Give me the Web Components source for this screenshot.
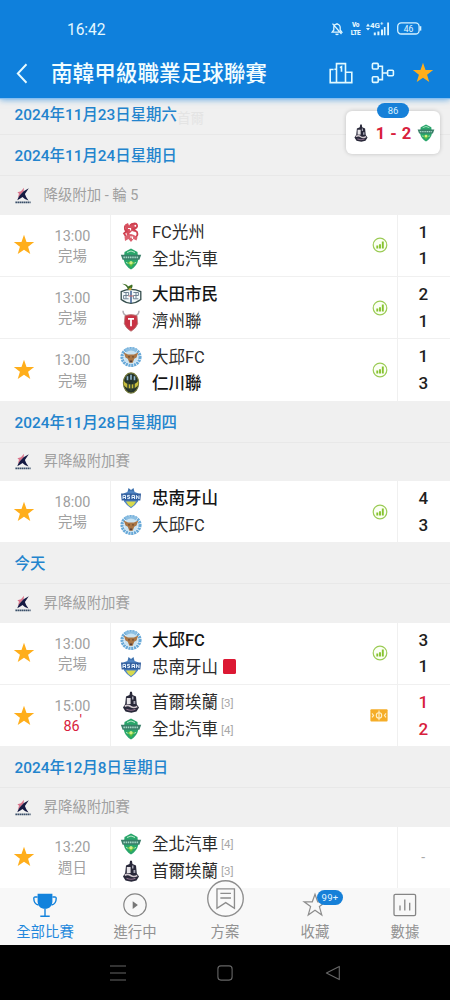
<!DOCTYPE html>
<html lang="zh-Hant">
<head>
<meta charset="utf-8">
<meta name="viewport" content="width=device-width, initial-scale=1">
<title>南韓甲級職業足球聯賽</title>
<style>
  html, body {
    margin: 0;
    height: 100%;
    background: #fff;
  }
  body {
    font-family: Roboto, "Noto Sans CJK TC", sans-serif;
    --blue: #0f80dc;
    --grey: #a0a0a0;
    --line: #f0f0f0;
    --red: #d8203c;
  }
</style>
</head>
<body>
<score-app></score-app>

<script>
const STAR = 'M12 .9l2.75 7.75 8.35.2-6.65 5 2.4 8.05L12 17.1l-6.85 4.8 2.4-8.05-6.65-5 8.35-.2z';

const ICONS = {
  back: '<svg viewBox="0 0 12 22"><path d="M10.7 1.3 1.6 11l9.1 9.7" fill="none" stroke="#e8fbff" stroke-width="2"/></svg>',
  podium: '<svg viewBox="0 0 24 22"><g fill="none" stroke="#e2faff" stroke-width="1.6"><path d="M7.5 20.6V1.6h9v19M7.5 7.3H5.4M4.6 7.5H1.2v13.1h21.6V10.3h-6"/><path d="M10.9 5.6 12.5 4.7v5"/></g></svg>',
  bracket: '<svg viewBox="0 0 24 22"><g fill="none" stroke="#e2faff" stroke-width="1.6"><rect x="1.4" y="1.4" width="5.8" height="5.6" rx="1"/><rect x="1.4" y="14.8" width="5.8" height="5.6" rx="1"/><rect x="16.6" y="8.2" width="5.8" height="5.6" rx="1"/><path d="M7.2 4.2h4.2v13.4H7.2M11.4 11h5.2"/></g></svg>',
  star: `<svg viewBox="0 0 24 24"><path d="${STAR}" fill="#ffae1b"/></svg>`,
  starLine: '<svg viewBox="0 0 24 24"><path d="M12 1.3l2.700 7.500h8.200l-6.500 4.800 2.400 8.500L12 17.300l-6.800 4.800 2.400-8.500L1.100 8.800h8.200z" fill="none" stroke="#8d8d8d" stroke-width="1.2"/></svg>',
  mute: '<svg viewBox="0 0 12 14"><g fill="none" stroke="#dff6ff" stroke-width="1.3"><path d="M1.2 10.2h9.6L9.2 8V5.4a3.2 3.2 0 0 0-6.4 0V8zM4.6 11.8q1.4 1.5 2.8 0M6 1v1.2M1.5 1.6l9 10.4"/></g></svg>',
  battery: '<svg viewBox="0 0 25 13"><rect x=".7" y=".8" width="21.4" height="11.2" rx="3.6" fill="none" stroke="#d5f1ff" stroke-width="1.3"/><path d="M23.5 4.2v4.4" stroke="#d5f1ff" stroke-width="1.6"/></svg>',
  signal: '<svg viewBox="0 0 24 14"><g fill="#dff6ff"><path d="M0 4.4 2 1.6l2 2.8zM0 6l2 2.6L4 6zM7.8 10.6h2v2.6h-2zM11.4 9.4h2v3.8h-2zM15 7.6h2v5.6h-2zM17.9 5h1.6v8.2h-1.6zM21.2.4h1.8v12.8h-1.8z"/></g></svg>',
  chart: '<svg viewBox="0 0 16 16"><circle cx="8" cy="8" r="6.8" fill="#fbfff4" stroke="#9bcb55" stroke-width="1.2"/><path d="M5.3 8.6v3M8 7.2v4.4M10.8 4.5v7.1" stroke="#86c32f" stroke-width="1.9"/></svg>',
  pitch: '<svg viewBox="0 0 18 13"><rect x=".4" y=".2" width="17.2" height="12.4" rx="1" fill="#f5ad28"/><g fill="none" stroke="#fff0c8" stroke-width="1.1"><circle cx="9" cy="6.4" r="2.7"/><path d="M9 1.6v9.6M2 4.4l1.6 2L2 8.4M16 4.4l-1.6 2 1.6 2"/></g></svg>',
  league: '<svg viewBox="0 0 16 17"><path d="M2.400 5.200 6 4.200 9 .8l-.4 3.600-3 3.200-2.800 3.400 1.200-4.200z" fill="#d9748b"/><path d="M4.800 8.200 8.600 4.200l5.200-2.900-3.900 5.700q1 3.400 3.600 6.500-4-.9-6-3.400-1.800 1.300-5.200 3.100.8-2.600 2.500-5z" fill="#151a42"/><path d="M.4 15.300h15.200" stroke="#3b506a" stroke-width="1.8" stroke-dasharray="1.600 .4"/></svg>',
  cup: '<svg viewBox="0 0 24 24"><path d="M4.6.8h14.8v7.4c0 4.5-3 7.6-7.4 7.6s-7.4-3.1-7.4-7.6z" fill="#1282dc"/><path d="M4.6 4H2.2Q.7 4 .8 5.6C.9 9.8 2.4 11.5 5.4 12M19.4 4h2.4q1.5 0 1.4 1.600c-.1 4.200-1.600 5.900-4.600 6.400M12 15.500v7.400M7.300 23.200h9.400" fill="none" stroke="#1282dc" stroke-width="1.4"/></svg>',
  play: '<svg viewBox="0 0 24 24"><circle cx="12" cy="12" r="11.2" fill="none" stroke="#858585" stroke-width="1.2"/><path d="M9.7 8.2v7.800l5.200-3.900z" fill="#777"/></svg>',
  note: '<svg viewBox="0 0 36 36"><circle cx="18" cy="18" r="17.3" fill="#fafafa" stroke="#8d8d8d" stroke-width="1.3"/><path d="M9.700 8.700h17v18.800L18.200 22l-8.500 5.500zM13 13h10.300M13 17.500h10.300" fill="none" stroke="#8d8d8d" stroke-width="1.3"/></svg>',
  stats: '<svg viewBox="0 0 24 24"><g fill="none" stroke="#858585" stroke-width="1.3"><rect x="1" y="1.3" width="21.6" height="21.4" rx="1.4"/><path d="M7 12.500v5M11.800 6.400v11.100M16.700 9.800v7.700"/></g></svg>',
  menu: '<svg viewBox="0 0 16 16"><path d="M0 1h16M0 8h16M0 15h16" stroke="#666" stroke-width="1.1"/></svg>',
  home: '<svg viewBox="0 0 16 16"><rect x=".9" y=".9" width="14.2" height="14.2" rx="3" fill="none" stroke="#666" stroke-width="1.1"/></svg>',
  prev: '<svg viewBox="0 0 16 16"><path d="M1.400 8 14.300 1.400v13.200z" fill="none" stroke="#666" stroke-width="1.1" stroke-linejoin="round"/></svg>',

  // club crests
  gwangju: '<svg viewBox="0 0 22 22"><path d="M5 3.500 8 2l1 2.500L12 2l4 1-2 2 3 1.500-3 1.500 1 3-3-1-3 3 2.500 1-4.500 1z" fill="#d8505f"/><path d="M5.200 4.500q-1.500 4 2 6.500M10 4q6-3 7 0t-4 4l4 3q1.500 4-2 5M7 10l-3 2.500 2 3" fill="none" stroke="#cf4050" stroke-width="1.8"/><path d="M4.500 15.500 8 14l3-1 3 1 3.500 2.500-1 3-3-1.500-2.500 3-2.500-3-3.500 2z" fill="#dc6270"/><path d="M8 7.500h2.500v2M10 16h2.500v2" fill="none" stroke="#fff" stroke-width="1.2"/></svg>',
  jeonbuk: '<svg viewBox="0 0 22 22"><path d="M4.500 4 11 .5l6.500 3.500.7 8Q17 18 11 21.500 5 18 3.800 12z" fill="#29a66b"/><path d="M7 4.500q4-3 8 0M6 14.500q5 3 10 0" fill="none" stroke="#b7e8c8" stroke-width="1"/><path d="M.8 6.700h20.400l-1.800 5H2.600z" fill="#397e68"/><path d="M3.400 9.300h15.200" stroke="#a5d8c6" stroke-width="1.7" stroke-dasharray="1.500 .7"/><path d="M7 14h8l-4 5z" fill="#5abf3c"/><circle cx="11" cy="14.700" r="1.7" fill="#d4ec86"/></svg>',
  daejeon: '<svg viewBox="0 0 22 22"><path d="M1.200 8.600Q11 4.300 20.800 8.600v8Q11 24 1.200 16.600z" fill="#f3f9fa" stroke="#344d4c" stroke-width="1.3"/><path d="M2 .8q5 0 6 2.600l4-1.800q1.300 1.200-.4 4l-3.900.7Q7 2.600 2 .8z" fill="#3d6e24"/><path d="M10.500 4.500q2 1.500.5 3l-3-1z" fill="#d0ac3c"/><path d="M3.600 9.500h5v3h-5v3.300h5M13.400 9.500h5v3h-5v3.300h5M6 9.500v6M16 9.500v6" stroke="#65798b" stroke-width=".9" fill="none"/><path d="M11 7.800V20" stroke="#3c5c92" stroke-width="1.5"/><path d="M8.500 13h5" stroke="#c86a6a" stroke-width="1"/></svg>',
  jeju: '<svg viewBox="0 0 22 22"><path d="M3 .7q0 5 5.500 5M19 .7q0 5-5.500 5" fill="none" stroke="#b1aeb4" stroke-width="1.5"/><path d="M5 5.700Q11 3.500 17 5.700l.7 8Q16 18.500 11 21.300 6 18.500 4.300 13.700z" fill="#c83344" stroke="#b47b78" stroke-width=".8"/><path d="M8 8h6v1.700h-2.100v6.500h-1.800V9.700H8z" fill="#fff"/></svg>',
  daegu: '<svg viewBox="0 0 22 22"><ellipse cx="11" cy="11" rx="9" ry="8.400" fill="none" stroke="#68a9d8" stroke-width="3.2" stroke-dasharray="2.200 .6"/><path d="M5 2.500h12l-1 4H6z" fill="#8dbfe2"/><ellipse cx="11" cy="11.300" rx="6.900" ry="6.700" fill="#c9e3f2"/><path d="M3.800 6.500 8 8.600h6l4.200-2.100-1.700 5-2.300 1.200-1.500 4H9.300l-1.500-4-2.300-1.200z" fill="#aa7544"/><path d="M8.400 10.800h1.200M12.400 10.800h1.200" stroke="#4d3626" stroke-width="1.2"/><path d="M9.600 14.500h2.800l-.6 1.700h-1.600z" fill="#533e36"/></svg>',
  incheon: '<svg viewBox="0 0 22 22"><ellipse cx="11" cy="11" rx="7.600" ry="10.100" fill="#25342c" stroke="#6d7232" stroke-width="1.1"/><path d="M7.500 4.300v4M11 2.700v5M14.500 4.300v4" stroke="#91b9cf" stroke-width="1.6"/><path d="M3.600 8.500Q6 12.500 11 12.500t7.400-4l-.3 4.500q-2 3.500-7.100 3.500T3.900 13z" fill="#c8bd3c"/><path d="M8 10v7M11 12v7M14 10v7" stroke="#354430" stroke-width="1.5"/></svg>',
  asan: '<svg viewBox="0 0 22 22"><path d="M7.500 5 8.500.9 11 3l2.500-2.100 1 4.100z" fill="#3e72af"/><path d="M3.500 6.500 11 3.500l7.500 3-.6 8Q15 19 11 21.200 7 19 4.100 14.500z" fill="#5085c3"/><path d="M1 6.500h20l-.7 7H1.700z" fill="#315e9e"/><path d="M3 12V8.400h2.500V12M3 10.500h2.500M9.800 8.400H7.500v1.500h2v1.700H7.300M12 12V8.400h2.500V12M12 10.500h2.500M16.400 12V8.400l2.600 3.400V8.400" fill="none" stroke="#e5f1fc" stroke-width="1"/><path d="M6 14.500h10Q14.500 18 11 20 7.500 18 6 14.500z" fill="#d8da4c"/></svg>',
  seoul: '<svg viewBox="0 0 22 22"><path d="M6 5.500 9.500 4l.6-3.300h1.800l.6 3.300 3.500 1.500.8 8 2.200 3-2.500 4-5.200 1.300L5.500 20.500 3 16.500 5.200 13z" fill="#282839"/><path d="M6.800 7h3.800v6H6.800z" fill="#e7e4e8"/><path d="M12 5.500h1.500v3H12zM13.500 10h1.800v3h-1.800z" fill="#a8a7b5"/><path d="M4.700 15.300q3.200-2 6 .2 3 2 6.600 0" fill="none" stroke="#d1c8ce" stroke-width="1.6"/><path d="M6.500 18.300q4.500 1.900 9 0" fill="none" stroke="#8f718c" stroke-width="1.1"/></svg>'
};

class UiIcon extends HTMLElement {
  constructor() {
    super();
    this.attachShadow({mode: 'open'});
  }
  connectedCallback() {
    this.shadowRoot.innerHTML = `
      <style>
        :host { display: block; flex: none; width: 22px; height: 22px; }
        svg { display: block; width: 100%; height: 100%; overflow: visible; }
      </style>${ICONS[this.getAttribute('name')] || ''}`;
  }
}

class StatusBar extends HTMLElement {
  constructor() {
    super();
    this.attachShadow({mode: 'open'}).innerHTML = `
      <style>
        :host {
          display: flex;
          align-items: center;
          box-sizing: border-box;
          height: 48px;
          padding: 10px 28px 0 67px;
          color: #e4f8ff;
        }
        .clock { font: 400 15.6px Roboto, sans-serif; letter-spacing: -.1px; margin: 2px auto 0 0; }
        .volte {
          display: flex;
          flex-direction: column;
          align-items: center;
          width: 11px;
          margin: 0 5px 0 7px;
          font: 900 6.5px/8px Roboto, sans-serif;
          letter-spacing: -.3px;
        }
        .net { position: relative; }
        .net span { position: absolute; left: 4px; top: 0; font: 700 8px/8px Roboto, sans-serif; }
        .battery { display: grid; margin-left: 7px; }
        .battery > * { grid-area: 1 / 1; }
        .battery span { font: 8.5px/14px Roboto, sans-serif; width: 23px; text-align: center; }
        .s1 { width: 12px; height: 14px; }
        .s2 { width: 24px; height: 14px; }
        .s3 { width: 25px; height: 13px; }
      </style>
      <span class="clock">16:42</span>
      <ui-icon class="s1" name="mute"></ui-icon>
      <div class="volte"><span>Vo</span><span>LTE</span></div>
      <div class="net"><ui-icon class="s2" name="signal"></ui-icon><span>4G⁺</span></div>
      <div class="battery"><ui-icon class="s3" name="battery"></ui-icon><span>46</span></div>`;
  }
}

class AppHeader extends HTMLElement {
  constructor() {
    super();
    this.attachShadow({mode: 'open'}).innerHTML = `
      <style>
        :host {
          display: block;
          flex: none;
          height: 98px;
          position: relative;
          z-index: 2;
          background: var(--blue);
          box-shadow: 0 1px 1px #87bff0, 0 2px 6px rgba(15, 128, 220, .55);
        }
        .bar {
          display: flex;
          align-items: center;
          height: 50px;
          padding: 0 16px;
        }
        h1 {
          margin: 0 auto 0 23px;
          padding-top: 2px;
          font-size: 21.6px;
          font-weight: 500;
          line-height: 30px;
          color: #f2fdff;
        }
        .back { width: 12px; height: 21px; }
        .tools { display: flex; align-items: center; gap: 18px; }
        .tools ui-icon { width: 24px; height: 22px; }
        .tools .fav { width: 22px; margin-left: -1px; }
      </style>
      <status-bar></status-bar>
      <div class="bar">
        <ui-icon class="back" name="back"></ui-icon>
        <h1><slot></slot></h1>
        <div class="tools">
          <ui-icon name="podium"></ui-icon>
          <ui-icon name="bracket"></ui-icon>
          <ui-icon class="fav" name="star"></ui-icon>
        </div>
      </div>`;
  }
}

class DateRow extends HTMLElement {
  constructor() {
    super();
    this.attachShadow({mode: 'open'}).innerHTML = `
      <style>
        :host {
          display: flex;
          align-items: center;
          box-sizing: border-box;
          height: 41px;
          padding: 2px 14.5px 0;
          border-bottom: 1px solid #e8e8e8;
          background: #f0f0f0;
          color: #2384cd;
          font-size: 15.4px;
          font-weight: 500;
          line-height: 22px;
        }
      </style>
      <slot></slot>`;
  }
}

class LeagueRow extends HTMLElement {
  constructor() {
    super();
    this.attachShadow({mode: 'open'}).innerHTML = `
      <style>
        :host {
          display: flex;
          align-items: center;
          gap: 12.5px;
          box-sizing: border-box;
          height: 38.4px;
          padding: 0 15px;
          background: #f0f0f0;
          color: var(--grey);
          font-size: 14.4px;
          line-height: 22px;
        }
        ui-icon { width: 16px; height: 17px; }
        span { padding-top: 1px; }
      </style>
      <ui-icon name="league"></ui-icon>
      <span><slot></slot></span>`;
  }
}

class MatchRow extends HTMLElement {
  constructor() {
    super();
    this.attachShadow({mode: 'open'});
  }

  connectedCallback() {
    this.render();
  }

  // team format: crest|name|score|rank, win marks the bold side
  team(side) {
    const [crest, name, score, rank] = this.getAttribute(side).split('|');
    const win = this.getAttribute('win') == side ? 'win' : '';
    const card = this.getAttribute('card') == side ? '<i class="card"></i>' : '';
    return {
      score,
      html: `
        <div class="team ${win}">
          <ui-icon name="${crest}"></ui-icon>
          <span class="name">${name}</span>
          ${rank ? `<span class="rank">[${rank}]</span>` : ''}${card}
        </div>`
    };
  }

  render() {
    const home = this.team('home');
    const away = this.team('away');
    const live = this.hasAttribute('live');
    const scores = home.score ? `<span>${home.score}</span><span>${away.score}</span>` : '<span class="none">-</span>';
    const badge = this.getAttribute('badge');
    this.shadowRoot.innerHTML = `
      <style>
        :host {
          display: grid;
          grid-template-columns: 35px 75px 1fr 34px 53px;
          box-sizing: border-box;
          height: 62.3px;
          background: #fff;
          border-bottom: 1px solid var(--line);
        }
        .fav { display: flex; align-items: center; padding-left: 13px; }
        .fav ui-icon { width: 22px; height: 22px; }
        .time {
          display: flex;
          flex-direction: column;
          justify-content: center;
          align-items: center;
          color: var(--grey);
          font-size: 14.4px;
          line-height: 20.4px;
          padding-top: 3px;
        }
        .live { color: var(--red); position: relative; left: -1px; }
        .live::after { content: "'"; position: absolute; left: 100%; top: -6px; }
        .teams {
          display: flex;
          flex-direction: column;
          justify-content: center;
          border-left: 1px solid var(--line);
          padding-left: 9px;
        }
        .team { display: flex; align-items: center; height: 26.8px; color: #2b2b2b; }
        .name { font-size: 16.5px; line-height: 24px; padding-top: 2px; margin-left: 10px; white-space: nowrap; }
        .win .name { font-weight: 500; color: #151515; }
        .rank { font-size: 11.5px; color: #a8a8a8; margin-left: 3px; padding-top: 1px; }
        .card { width: 13px; height: 15px; border-radius: 1.5px; background: #dc1833; margin-left: 5px; }
        .badge { display: flex; align-items: center; justify-content: center; }
        .badge ui-icon { width: 16px; height: 16px; }
        .badge ui-icon[name=pitch] { width: 18px; height: 13px; margin-left: -2px; }
        .score {
          display: flex;
          flex-direction: column;
          align-items: center;
          justify-content: center;
          border-left: 1px solid var(--line);
          padding-right: 1.5px;
          font-size: 17px;
          font-weight: 500;
          line-height: 26.8px;
          color: ${live ? 'var(--red)' : '#1e1e1e'};
        }
        .none { font-size: 14px; font-weight: 400; color: #aaa; }
      </style>
      <div class="fav">${this.hasAttribute('fav') ? '<ui-icon name="star"></ui-icon>' : ''}</div>
      <div class="time">
        <span>${this.getAttribute('time')}</span>
        <span class="${live ? 'live' : ''}">${this.getAttribute('state')}</span>
      </div>
      <div class="teams">${home.html}${away.html}</div>
      <div class="badge">${badge ? `<ui-icon name="${badge}"></ui-icon>` : ''}</div>
      <div class="score">${scores}</div>`;
  }
}

class LiveCard extends HTMLElement {
  constructor() {
    super();
    this.attachShadow({mode: 'open'}).innerHTML = `
      <style>
        :host {
          position: absolute;
          z-index: 3;
          right: 10px;
          top: 111px;
          display: flex;
          align-items: center;
          justify-content: space-between;
          box-sizing: border-box;
          width: 94px;
          height: 43px;
          padding: 1px 5px 0 6px;
          border-radius: 6px;
          background: #fff;
          box-shadow: 0 0 4px rgba(0, 0, 0, .2);
        }
        .minute {
          position: absolute;
          left: 31px;
          top: -8px;
          width: 32px;
          height: 15px;
          border-radius: 8px;
          background: #1680d8;
          color: #d8f1ff;
          font-size: 9.5px;
          line-height: 16px;
          text-align: center;
        }
        .score { font-size: 16.5px; font-weight: 700; color: var(--red); white-space: pre; word-spacing: 1px; }
        ui-icon { width: 18px; height: 18px; }
      </style>
      <span class="minute">86</span>
      <ui-icon name="seoul"></ui-icon>
      <span class="score"><slot></slot></span>
      <ui-icon name="jeonbuk"></ui-icon>`;
  }
}

class NavItem extends HTMLElement {
  constructor() {
    super();
    this.attachShadow({mode: 'open'});
  }
  connectedCallback() {
    const badge = this.getAttribute('badge');
    this.shadowRoot.innerHTML = `
      <style>
        :host {
          display: flex;
          flex-direction: column;
          align-items: center;
          justify-content: flex-end;
          flex: 1;
          position: relative;
          padding-bottom: 2px;
          color: #929292;
          font-size: 14.4px;
          line-height: 21px;
        }
        :host([active]) { color: #2187dc; }
        ui-icon { width: 24px; height: 24px; margin-bottom: 5px; }
        :host([big]) ui-icon { width: 37px; height: 37px; margin-bottom: 5px; }
        .badge {
          position: absolute;
          left: 47px;
          top: 2px;
          width: 26px;
          height: 14.5px;
          border-radius: 8px;
          background: #1680d8;
          color: #e2f4ff;
          font-size: 9.5px;
          line-height: 15px;
          text-align: center;
          letter-spacing: .3px;
        }
      </style>
      <ui-icon name="${this.getAttribute('icon')}"></ui-icon>
      <span><slot></slot></span>
      ${badge ? `<span class="badge">${badge}</span>` : ''}`;
  }
}

class BottomNav extends HTMLElement {
  constructor() {
    super();
    this.attachShadow({mode: 'open'}).innerHTML = `
      <style>
        :host {
          display: flex;
          flex: none;
          height: 57px;
          position: relative;
          z-index: 2;
          background: #f8f8f8;
        }
      </style>
      <slot></slot>`;
  }
}

class SystemBar extends HTMLElement {
  constructor() {
    super();
    this.attachShadow({mode: 'open'}).innerHTML = `
      <style>
        :host {
          display: flex;
          align-items: center;
          justify-content: center;
          gap: 91.5px;
          flex: none;
          height: 55px;
          background: #000;
        }
        ui-icon { width: 16px; height: 16px; }
      </style>
      <ui-icon name="menu"></ui-icon>
      <ui-icon name="home"></ui-icon>
      <ui-icon name="prev"></ui-icon>`;
  }
}

class ScoreApp extends HTMLElement {
  constructor() {
    super();
    this.attachShadow({mode: 'open'}).innerHTML = `
      <style>
        :host {
          display: flex;
          flex-direction: column;
          position: relative;
          width: 450px;
          height: 1000px;
          overflow: hidden;
        }
        main { flex: 1; min-height: 0; overflow: hidden; }
        .list { margin-top: -3.6px; }
        .toast {
          position: absolute;
          z-index: 1;
          left: 177px;
          top: 108px;
          font-size: 13.5px;
          line-height: 20px;
          color: #e4e4e4;
        }
      </style>
      <app-header>南韓甲級職業足球聯賽</app-header>
      <main>
        <div class="list">
          <date-row>2024年11月23日星期六</date-row>
          <date-row>2024年11月24日星期日</date-row>
          <league-row>降级附加 - 輪 5</league-row>
          <match-row fav time="13:00" state="完場" home="gwangju|FC光州|1" away="jeonbuk|全北汽車|1" badge="chart"></match-row>
          <match-row time="13:00" state="完場" home="daejeon|大田市民|2" away="jeju|濟州聯|1" win="home" badge="chart"></match-row>
          <match-row fav time="13:00" state="完場" home="daegu|大邱FC|1" away="incheon|仁川聯|3" win="away" badge="chart"></match-row>
          <date-row>2024年11月28日星期四</date-row>
          <league-row>昇降級附加賽</league-row>
          <match-row fav time="18:00" state="完場" home="asan|忠南牙山|4" away="daegu|大邱FC|3" win="home" badge="chart"></match-row>
          <date-row>今天</date-row>
          <league-row>昇降級附加賽</league-row>
          <match-row fav time="13:00" state="完場" home="daegu|大邱FC|3" away="asan|忠南牙山|1" win="home" card="away" badge="chart"></match-row>
          <match-row fav live time="15:00" state="86" home="seoul|首爾埃蘭|1|3" away="jeonbuk|全北汽車|2|4" badge="pitch"></match-row>
          <date-row>2024年12月8日星期日</date-row>
          <league-row>昇降級附加賽</league-row>
          <match-row fav time="13:20" state="週日" home="jeonbuk|全北汽車||4" away="seoul|首爾埃蘭||3"></match-row>
        </div>
      </main>
      <span class="toast">首爾</span>
      <live-card>1 - 2</live-card>
      <bottom-nav>
        <nav-item active icon="cup">全部比賽</nav-item>
        <nav-item icon="play">進行中</nav-item>
        <nav-item big icon="note">方案</nav-item>
        <nav-item icon="starLine" badge="99+">收藏</nav-item>
        <nav-item icon="stats">數據</nav-item>
      </bottom-nav>
      <system-bar></system-bar>`;
  }
}

customElements.define('ui-icon', UiIcon);
customElements.define('status-bar', StatusBar);
customElements.define('app-header', AppHeader);
customElements.define('date-row', DateRow);
customElements.define('league-row', LeagueRow);
customElements.define('match-row', MatchRow);
customElements.define('live-card', LiveCard);
customElements.define('nav-item', NavItem);
customElements.define('bottom-nav', BottomNav);
customElements.define('system-bar', SystemBar);
customElements.define('score-app', ScoreApp);
</script>
</body>
</html>
